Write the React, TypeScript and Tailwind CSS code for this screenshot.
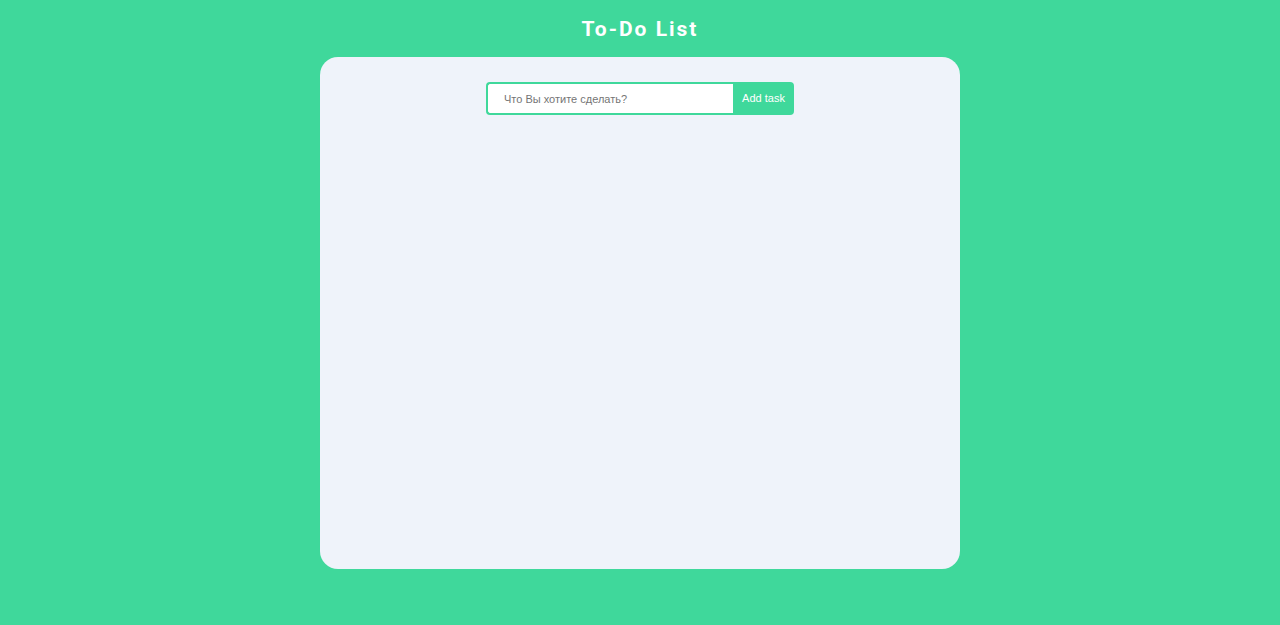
import { useState } from "react";

const App = () => {
  const [task, setTask] = useState("");

  return (
    <div className="flex min-h-[625px] w-full flex-col items-center bg-[#3fd89b] pt-[15px]">
      <h1 className="h-[28px] font-['Roboto',sans-serif] text-[21px] font-bold leading-[28px] tracking-[2px] text-white">
        To-Do List
      </h1>
      <div className="mt-[14px] flex h-[512px] w-[640px] flex-col items-center rounded-[18px] bg-[#eff3fa] pt-[25px]">
        <form
          className="flex h-[33px] w-[308px]"
          onSubmit={(e) => {
            e.preventDefault();
            setTask("");
          }}
        >
          <input
            value={task}
            onChange={(e) => setTask(e.target.value)}
            placeholder="Что Вы хотите сделать?"
            className="h-full w-[247px] rounded-l-[4px] border-2 border-r-0 border-[#3fd89b] bg-white pl-[16px] font-['Liberation_Sans',Arial,sans-serif] text-[11px] text-gray-700 outline-none placeholder:text-[#757575]"
          />
          <button
            type="submit"
            className="h-full w-[61px] rounded-r-[4px] bg-[#3fd89b] font-['Liberation_Sans',Arial,sans-serif] text-[11px] text-white"
          >
            Add task
          </button>
        </form>
      </div>
    </div>
  );
};

export default App;
